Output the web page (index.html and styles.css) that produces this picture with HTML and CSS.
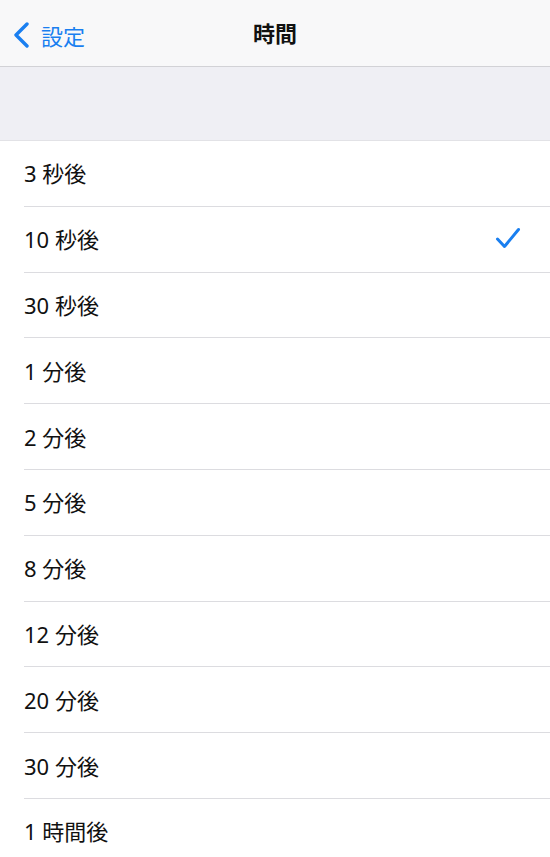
FILE: index.html
```html
<!DOCTYPE html>
<html>
<head>
    <meta charset="utf-8">
    <meta name="viewport" content="width=device-width, initial-scale=1.0">
    <title>時間</title>
    <link rel="stylesheet" href="styles.css">
</head>
<body>
    <header class="nav-bar">
        <a class="back-link" href="#">
            <svg class="back-icon" width="18" height="26" viewBox="0 0 18 26">
                <path d="M15 2 L4 13 L15 24" fill="none" stroke="#1a7ff0" stroke-width="3.4" stroke-linecap="round" stroke-linejoin="round"/>
            </svg>
            <span>設定</span>
        </a>
        <h1 class="nav-title">時間</h1>
    </header>

    <div class="section-gap"></div>

    <ul class="option-list">
        <li class="option">3 秒後</li>
        <li class="option selected">10 秒後
            <svg class="check" width="26" height="22" viewBox="0 0 26 22">
                <path d="M2.5 12 L9.5 19.5 L23.5 2.5" fill="none" stroke="#1a7ff0" stroke-width="3" stroke-linecap="round" stroke-linejoin="round"/>
            </svg>
        </li>
        <li class="option">30 秒後</li>
        <li class="option">1 分後</li>
        <li class="option">2 分後</li>
        <li class="option">5 分後</li>
        <li class="option">8 分後</li>
        <li class="option">12 分後</li>
        <li class="option">20 分後</li>
        <li class="option">30 分後</li>
        <li class="option">1 時間後</li>
    </ul>
</body>
</html>
```

FILE: styles.css
```css
body {
    margin: 0;
    font-family: "Noto Sans", "Noto Sans CJK JP", sans-serif;
    background: #fff;
    color: #111;
}

.nav-bar {
    height: 66px;
    background: #f8f8f9;
    border-bottom: 1px solid #d2d2d6;
    display: flex;
    align-items: center;
    justify-content: center;
    position: relative;
}

.back-link {
    position: absolute;
    left: 12px;
    top: 19px;
    display: flex;
    align-items: center;
    gap: 11px;
    color: #1a7ff0;
    text-decoration: none;
    font-size: 22px;
}

.nav-title {
    margin: 0 0 2px;
    font-size: 22px;
    font-weight: bold;
}

.section-gap {
    height: 73px;
    background: #efeff4;
    border-bottom: 1px solid #e2e2e6;
}

.option-list {
    list-style: none;
    margin: 0;
    padding: 0 0 0 24px;
}

.option {
    height: 64.8px;
    border-bottom: 1px solid #dcdce0;
    display: flex;
    align-items: center;
    justify-content: space-between;
    padding: 0 29px 2px 0;
    box-sizing: border-box;
    height: 65.8px;
    font-size: 22px;
}

.check {
    display: block;
}
```
